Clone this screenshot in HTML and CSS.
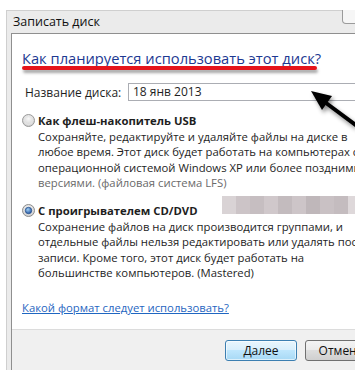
FILE: index.html
```html
<!DOCTYPE html>
<html lang="ru">
<head>
<meta charset="utf-8">
<title>Записать диск</title>
<link rel="stylesheet" href="styles.css">
</head>
<body>
<div class="window">
  <div class="frame">
    <div class="titlebar">
      <span class="title">Записать диск</span>
      <span class="close-btn"></span>
    </div>
    <div class="panel">
      <div class="main">
        <h1 class="heading">Как планируется использовать этот диск?</h1>
        <div class="redline"></div>
        <div class="name-row">
          <span class="label">Название диска:</span>
          <div class="input">18 янв 2013</div>
        </div>
        <div class="option">
          <div class="opt-title">
            <svg class="radio" width="13" height="13" viewBox="0 0 13 13">
              <defs>
                <radialGradient id="rg1" cx="0.5" cy="0.35" r="0.7">
                  <stop offset="0" stop-color="#f7f7f7"/>
                  <stop offset="1" stop-color="#c9c9c9"/>
                </radialGradient>
              </defs>
              <circle cx="6.5" cy="6.5" r="6" fill="url(#rg1)" stroke="#9a9a9a" stroke-width="1"/>
              <circle cx="6.5" cy="6.5" r="4" fill="none" stroke="#e6e6e6" stroke-width="1"/>
            </svg>
            <b>Как флеш-накопитель USB</b>
          </div>
          <div class="desc">
            <span class="line">Сохраняйте, редактируйте и удаляйте файлы на диске в</span>
            <span class="line">любое время. Этот диск будет работать на компьютерах с</span>
            <span class="line">операционной системой Windows XP или более поздними</span>
            <span class="line light">версиями. (файловая система LFS)</span>
          </div>
        </div>
        <div class="option second">
          <div class="opt-title">
            <svg class="radio" width="13" height="13" viewBox="0 0 13 13">
              <defs>
                <radialGradient id="rg2" cx="0.5" cy="0.35" r="0.7">
                  <stop offset="0" stop-color="#f7f7f7"/>
                  <stop offset="1" stop-color="#c9c9c9"/>
                </radialGradient>
                <radialGradient id="rg3" cx="0.4" cy="0.35" r="0.7">
                  <stop offset="0" stop-color="#9fd0f5"/>
                  <stop offset="1" stop-color="#1f4f9c"/>
                </radialGradient>
              </defs>
              <circle cx="6.5" cy="6.5" r="6" fill="url(#rg2)" stroke="#8c8c8c" stroke-width="1"/>
              <circle cx="6.5" cy="6.5" r="3.2" fill="url(#rg3)" stroke="#264f8c" stroke-width="0.8"/>
            </svg>
            <b>С проигрывателем CD/DVD</b>
          </div>
          <div class="desc">
            <span class="line">Сохранение файлов на диск производится группами, и</span>
            <span class="line">отдельные файлы нельзя редактировать или удалять после</span>
            <span class="line">записи. Кроме того, этот диск будет работать на</span>
            <span class="line">большинстве компьютеров. (Mastered)</span>
          </div>
        </div>
        <a class="help" href="#">Какой формат следует использовать?</a>
      </div>
      <div class="footer">
        <button class="btn default">Далее</button>
        <button class="btn">Отмена</button>
      </div>
    </div>
  </div>
  <div class="mosaic">
    <i style="background:#d9d3d5"></i><i style="background:#ccc4c7"></i><i style="background:#c6bec1"></i><i style="background:#d0c8cb"></i><i style="background:#c3bbbe"></i><i style="background:#cdc5c8"></i><i style="background:#bfb7ba"></i><i style="background:#c9c1c4"></i><i style="background:#c4bcbf"></i><i style="background:#ded8da"></i>
  </div>
  <svg class="arrow" width="355" height="370" viewBox="0 0 355 370">
    <line x1="322" y1="100" x2="368" y2="134" stroke="#000" stroke-width="4"/>
    <polygon points="311,91 332,96 322,110" fill="#000"/>
  </svg>
</div>
</body>
</html>
```

FILE: styles.css
```css
* { box-sizing: border-box; }
html, body {
  margin: 0;
  padding: 0;
  width: 355px;
  height: 370px;
  overflow: hidden;
  background: #fff;
}
body {
  font-family: "Open Sans", "Noto Sans", sans-serif;
  font-size: 11.3px;
  color: #1e1e1e;
}
.window {
  position: relative;
  width: 355px;
  height: 370px;
  padding: 10px 0 0 6px;
}
.frame {
  height: 360px;
  background: #ebebeb;
  border-left: 1px solid #cfcfcf;
  border-top: 1px solid #cfcfcf;
  padding-left: 4px;
  display: flex;
  flex-direction: column;
}
.titlebar {
  height: 22px;
  display: flex;
  align-items: flex-start;
  flex-shrink: 0;
}
.title {
  flex: 1;
  padding-left: 2px;
  padding-top: 3px;
  line-height: 15px;
  font-size: 12.5px;
  color: #111;
}
.close-btn {
  flex-shrink: 0;
  width: 22px;
  height: 14px;
  margin-top: -1px;
  margin-right: -9px;
  border: 1px solid #9b9b9b;
  border-top: none;
  border-radius: 0 0 4px 4px;
  background: #f6f6f6;
}
.panel {
  flex: 1;
  background: #fff;
  border-left: 1px solid #8f8f8f;
  border-top: 1px solid #8f8f8f;
  display: flex;
  flex-direction: column;
}
.main {
  flex: 1;
  padding-left: 10px;
  display: flex;
  flex-direction: column;
  align-items: flex-start;
}
.heading {
  margin: 14px 0 0 0;
  font-size: 14.7px;
  font-weight: normal;
  line-height: 20px;
  color: #1d3992;
  white-space: nowrap;
}
.redline {
  width: 295px;
  height: 4px;
  margin-top: -2px;
  background: #e5141b;
  border-radius: 2px;
  box-shadow: 1px 3px 3px rgba(0, 0, 0, 0.35);
}
.name-row {
  display: flex;
  align-items: center;
  margin-top: 13px;
  padding-left: 3px;
  width: 340px;
  font-size: 12px;
}
.label {
  width: 103px;
  flex-shrink: 0;
  white-space: nowrap;
}
.input {
  flex: 1;
  height: 18px;
  margin-right: -20px;
  border: 1px solid #abadb3;
  border-right: none;
  padding-left: 4px;
  line-height: 16px;
  white-space: nowrap;
}
.option {
  margin-top: 12px;
  line-height: 15.5px;
}
.option.second {
  margin-top: 12.5px;
}
.opt-title {
  display: flex;
  align-items: center;
  white-space: nowrap;
}
.opt-title b {
  font-weight: bold;
}
.radio {
  margin-left: 0;
  margin-right: 3px;
  flex-shrink: 0;
}
.desc {
  padding-left: 16px;
  display: flex;
  flex-direction: column;
}
.line {
  white-space: nowrap;
}
.line.light {
  color: #6a6a6a;
}
.help {
  margin-top: 19px;
  color: #1f66c1;
  text-decoration: underline;
  line-height: 16px;
  white-space: nowrap;
}
.footer {
  height: 41px;
  flex-shrink: 0;
  background: #f0f0f0;
  border-top: 1px solid #dcdcdc;
  display: flex;
  align-items: flex-start;
  padding: 10px 0 0 213px;
  gap: 8px;
}
.btn {
  flex-shrink: 0;
  width: 72px;
  height: 21px;
  font-family: inherit;
  font-size: 12px;
  color: #111;
  border: 1px solid #707070;
  border-radius: 3px;
  background: linear-gradient(#f4f4f4 0%, #ebebeb 45%, #dddddd 50%, #cfcfcf 100%);
  padding: 0;
  line-height: 18px;
}
.btn.default {
  border-color: #3c7fb1;
  background: linear-gradient(#e9f6fd 0%, #d9effc 45%, #bee6fd 50%, #a7d9f5 100%);
  box-shadow: inset 0 0 0 1px rgba(255, 255, 255, 0.6);
}
.mosaic {
  position: absolute;
  left: 222px;
  top: 196px;
  width: 140px;
  height: 18px;
  display: flex;
}
.mosaic i {
  flex: 1;
  height: 100%;
}
.arrow {
  position: absolute;
  left: 0;
  top: 0;
  filter: drop-shadow(2px 3px 2px rgba(0, 0, 0, 0.45));
}
```
